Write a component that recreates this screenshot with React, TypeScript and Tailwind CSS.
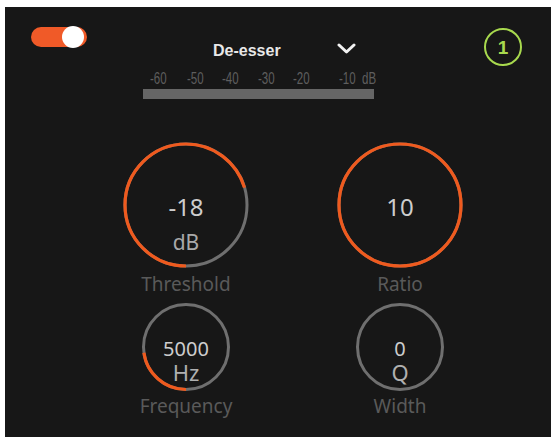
import React from 'react'

type KnobProps = {
  size: number
  radius: number
  span: number
  value: string
  unit?: string
  label: string
  big?: boolean
}

const ORANGE = '#ef5a1e'
const TRACK = '#6f6f6f'

const Knob = ({ size, radius, span, value, unit, label, big }: KnobProps) => {
  const c = size / 2
  const circ = 2 * Math.PI * radius
  const len = (span / 360) * circ

  return (
    <div className="flex flex-col items-center">
      <div className="relative" style={{ width: size, height: size }}>
        <svg width={size} height={size} viewBox={`0 0 ${size} ${size}`}>
          <circle cx={c} cy={c} r={radius} fill="none" stroke={TRACK} strokeWidth={3} />
          {span > 0 && (
            <circle
              cx={c}
              cy={c}
              r={radius}
              fill="none"
              stroke={ORANGE}
              strokeWidth={3.2}
              strokeDasharray={`${len} ${circ}`}
              transform={`rotate(90 ${c} ${c})`}
            />
          )}
        </svg>
        {big ? (
          <div className="absolute inset-x-0 top-[52px] flex flex-col items-center font-['Noto_Sans',sans-serif]">
            <span className="text-[24px] leading-[28px] text-[#cdcdcd]">{value}</span>
            {unit && <span className="mt-[9px] text-[21px] leading-[24px] text-[#a9a9a9]">{unit}</span>}
          </div>
        ) : (
          <div className="absolute inset-x-0 top-[36px] flex flex-col items-center font-['Noto_Sans',sans-serif]">
            <span className="text-[20px] leading-[22px] text-[#cdcdcd]">{value}</span>
            {unit && <span className="text-[22px] leading-[24px] text-[#b0b0b0]">{unit}</span>}
          </div>
        )}
      </div>
      <span
        className={`${big ? 'mt-[4px]' : 'mt-[3px]'} text-[19px] leading-[22px] text-[#5a5a5a] font-['Noto_Sans',sans-serif]`}
      >
        {label}
      </span>
    </div>
  )
}

// dB scale ticks, each cell as wide as the gap to the next label
const scale = [
  { t: '-60', w: 'w-[37px]' },
  { t: '-50', w: 'w-[35px]' },
  { t: '-40', w: 'w-[36px]' },
  { t: '-30', w: 'w-[35px]' },
  { t: '-20', w: 'w-[46px]' },
  { t: '-10', w: 'w-[23px]' },
  { t: 'dB', w: 'w-[18px]' }
]

export default function App() {
  return (
    <div className="bg-white h-[440px] w-[554px] pt-[7px] pl-[5px]">
      <div className="w-[546px] h-[430px] bg-[#171717] flex flex-col">
        <header className="flex items-start font-['Liberation_Sans',Arial,sans-serif]">
          <div className="ml-[26px] mt-[20px] w-[56px] h-[20px] rounded-full bg-[#f05a28] flex items-center justify-end pr-[3px]">
            <div className="w-[22px] h-[22px] rounded-full bg-white" />
          </div>

          <div className="ml-[56px] mt-[34px] w-[232px] flex flex-col">
            <div className="flex items-center h-[20px]">
              <span className="ml-[70px] text-[16px] leading-[20px] font-bold text-[#e8e8e8]">De-esser</span>
              <svg className="ml-[56px] mt-[-4px]" width="19" height="12" viewBox="0 0 19 12">
                <polyline points="2,2 9.5,9 17,2" fill="none" stroke="#f2f2f2" strokeWidth="3" strokeLinecap="round" strokeLinejoin="round" />
              </svg>
            </div>
            <div className="mt-[9px] pl-[7px] flex h-[18px] text-[16px] leading-[18px] text-[#5e5e5e]">
              {scale.map(s => (
                <span key={s.t} className={`${s.w} shrink-0 whitespace-nowrap`}>
                  <span className="inline-block origin-left scale-x-[0.72]">{s.t}</span>
                </span>
              ))}
            </div>
            <div className="mt-[1px] h-[10px] w-[231px] bg-[#666666]" />
          </div>

          <div className="ml-auto mr-[29px] mt-[21px] w-[38px] h-[38px] rounded-full border-[2.5px] border-[#a8d94e] flex items-center justify-center">
            <span className="text-[19px] leading-none font-semibold text-[#a8d94e]">1</span>
          </div>
        </header>

        <div className="mt-[42px] ml-[116px] grid grid-cols-[130px_130px] gap-x-[84px]">
          <Knob size={128} radius={61} span={253} value="-18" unit="dB" label="Threshold" big />
          <Knob size={128} radius={61} span={360} value="10" label="Ratio" big />
          <div className="mt-[7px]">
            <Knob size={90} radius={42.5} span={82} value="5000" unit="Hz" label="Frequency" />
          </div>
          <div className="mt-[7px]">
            <Knob size={90} radius={42.5} span={0} value="0" unit="Q" label="Width" />
          </div>
        </div>
      </div>
    </div>
  )
}
